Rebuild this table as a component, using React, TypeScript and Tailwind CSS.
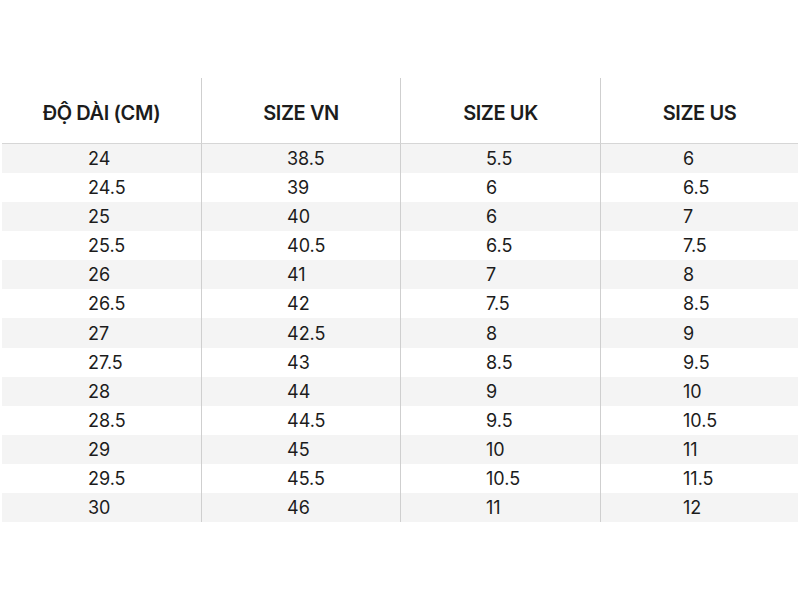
import React from "react";

const rows: [string, string, string, string][] = [
  ["24", "38.5", "5.5", "6"],
  ["24.5", "39", "6", "6.5"],
  ["25", "40", "6", "7"],
  ["25.5", "40.5", "6.5", "7.5"],
  ["26", "41", "7", "8"],
  ["26.5", "42", "7.5", "8.5"],
  ["27", "42.5", "8", "9"],
  ["27.5", "43", "8.5", "9.5"],
  ["28", "44", "9", "10"],
  ["28.5", "44.5", "9.5", "10.5"],
  ["29", "45", "10", "11"],
  ["29.5", "45.5", "10.5", "11.5"],
  ["30", "46", "11", "12"],
];

const headers = ["ĐỘ DÀI (CM)", "SIZE VN", "SIZE UK", "SIZE US"];
const pads = ["pl-[86px]", "pl-[85px]", "pl-[85px]", "pl-[82px]"];

export default function App() {
  return (
    <div
      className="w-[800px] h-[600px] bg-white pt-[78px] px-[2px] text-[#1c1c1c]"
      style={{ fontFamily: "Inter, 'Noto Sans', sans-serif" }}
    >
      <div className="grid grid-cols-[199px_199px_200px_198px]">
        {headers.map((h, i) => (
          <div
            key={h}
            className={`h-[66px] flex items-center justify-center border-b border-[#d6d6d6] text-[20px] font-semibold tracking-[-0.4px] pt-[4px] ${
              i > 0 ? "border-l border-l-[#cfcfcf]" : ""
            }`}
          >
            {h}
          </div>
        ))}
        {rows.map((r, ri) =>
          r.map((c, ci) => (
            <div
              key={`${ri}-${ci}`}
              className={`${ri === 6 ? "h-[30px]" : "h-[29px]"} flex items-center text-[18px] ${pads[ci]} ${
                ri % 2 === 0 ? "bg-[#f4f4f4]" : "bg-white"
              } ${ci > 0 ? "border-l border-[#cfcfcf]" : ""}`}
            >
              {c}
            </div>
          ))
        )}
      </div>
    </div>
  );
}
